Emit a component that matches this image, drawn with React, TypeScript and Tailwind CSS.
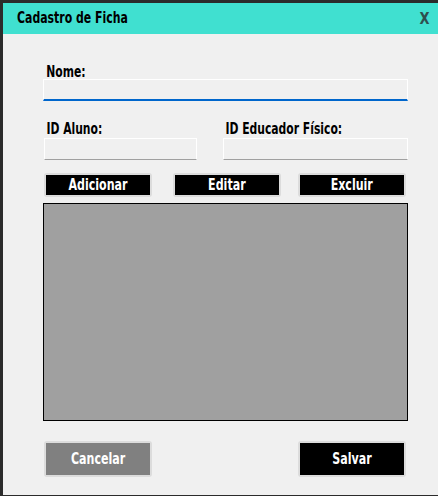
import React from "react";

const font = {
  fontFamily: '"DejaVu Sans Condensed", "Liberation Sans", sans-serif',
};

function Field({ label, className }: { label: string; className?: string }) {
  return (
    <div className={"flex flex-col " + (className ?? "")}>
      <span className="inline-block origin-left scale-x-[0.8] whitespace-nowrap pl-[3px] text-[15px] font-bold leading-[16px] text-black">
        {label}
      </span>
      <div className="mt-[1px] h-[22px] border border-white border-b-[#a0a0a0] bg-[#f0f0f0]" />
    </div>
  );
}

function ActionButton({
  label,
  bg = "bg-black",
  className,
}: {
  label: string;
  bg?: string;
  className?: string;
}) {
  return (
    <button
      className={
        "flex h-full w-[108px] items-stretch rounded-[3px] border-2 border-[#dcdcdc] bg-white p-0 " +
        (className ?? "")
      }
    >
      <span className={"flex flex-1 items-center justify-center " + bg}>
        <span className="inline-block scale-x-[0.82] whitespace-nowrap text-[15px] font-bold text-white">
          {label}
        </span>
      </span>
    </button>
  );
}

export default function App() {
  return (
    <div className="h-[496px] w-[438px] overflow-hidden bg-[#2b2b2b] pl-[3px] pt-[3px]" style={font}>
      <div className="flex h-[492px] flex-col bg-[#f0f0f0]">
        {/* Title bar */}
        <div className="flex h-[31px] items-center justify-between bg-[#40e0d0] pl-[14px] pr-[8px]">
          <span className="inline-block origin-left scale-x-[0.81] whitespace-nowrap text-[15px] font-bold text-black">
            Cadastro de Ficha
          </span>
          <span className="inline-block scale-x-[0.9] text-[16px] font-bold text-[#2f4f4f]">X</span>
        </div>

        <div className="flex flex-col pl-[40px] pr-[30px]">
          {/* Nome */}
          <div className="mt-[31px] flex flex-col">
            <span className="inline-block origin-left scale-x-[0.8] pl-[4px] text-[15px] font-bold leading-[14px] text-black">
              Nome:
            </span>
            <div className="h-[22px] border border-white border-b-2 border-b-[#0066cc] bg-[#f0f0f0]" />
          </div>

          {/* IDs */}
          <div className="mt-[20px] flex justify-between">
            <Field label="ID Aluno:" className="ml-[1px] w-[153px]" />
            <Field label="ID Educador Físico:" className="w-[185px]" />
          </div>

          {/* Buttons */}
          <div className="mt-[13px] flex h-[24px] pl-[1px]">
            <ActionButton label="Adicionar" />
            <ActionButton label="Editar" className="ml-[21px]" />
            <ActionButton label="Excluir" className="ml-[17px]" />
          </div>

          {/* Table */}
          <div className="mt-[6px] h-[218px] border border-black bg-[#a0a0a0]" />

          {/* Bottom buttons */}
          <div className="mt-[20px] flex h-[36px] justify-between pl-[1px] pr-[2px]">
            <ActionButton label="Cancelar" bg="bg-[#808080]" />
            <ActionButton label="Salvar" />
          </div>
        </div>
      </div>
    </div>
  );
}
